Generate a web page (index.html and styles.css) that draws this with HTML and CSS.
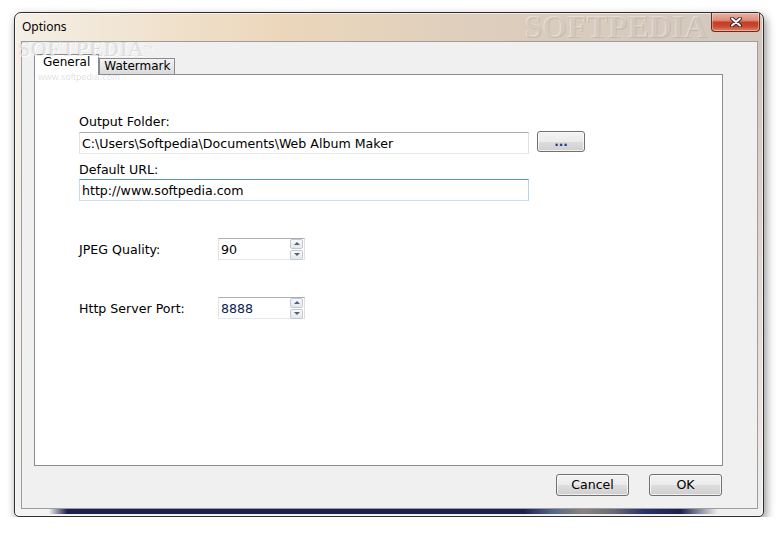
FILE: index.html
```html
<!DOCTYPE html>
<html>
<head>
    <meta charset="UTF-8">
    <title>Options</title>
    <link rel="stylesheet" href="styles.css">
</head>
<body>
    <div class="window">
        <div class="titlebar">
            <span class="title">Options</span>
            <button class="close-btn">
                <svg width="14" height="10" viewBox="0 0 14 10">
                    <path d="M3 1.5 L11 8.5 M11 1.5 L3 8.5" stroke="#3a2a2a" stroke-width="4" stroke-linecap="round"/>
                    <path d="M3 1.5 L11 8.5 M11 1.5 L3 8.5" stroke="#fff" stroke-width="2" stroke-linecap="round"/>
                </svg>
            </button>
        </div>

        <!-- softpedia watermarks -->
        <div class="mark mark-title">SOFTPEDIA</div>
        <div class="mark mark-client">SOFTPEDIA<span class="tm">™</span></div>
        <div class="mark mark-url">www.softpedia.com</div>

        <div class="frame-body">
            <div class="client">
                <div class="tabs">
                    <div class="tab active">General</div>
                    <div class="tab">Watermark</div>
                </div>

                <div class="tab-page">
                    <div class="field-label">Output Folder:</div>
                    <div class="folder-row">
                        <input class="text-box" type="text" value="C:\Users\Softpedia\Documents\Web Album Maker">
                        <button class="btn browse-btn">...</button>
                    </div>

                    <div class="field-label url-label">Default URL:</div>
                    <input class="text-box focused" type="text" value="http://www.softpedia.com">

                    <div class="spin-row">
                        <span class="spin-label">JPEG Quality:</span>
                        <div class="spin">
                            <input type="text" value="90">
                            <div class="spin-btns">
                                <span class="spin-up"></span>
                                <span class="spin-down"></span>
                            </div>
                        </div>
                    </div>

                    <div class="spin-row">
                        <span class="spin-label">Http Server Port:</span>
                        <div class="spin">
                            <input type="text" value="8888" class="port">
                            <div class="spin-btns">
                                <span class="spin-up"></span>
                                <span class="spin-down"></span>
                            </div>
                        </div>
                    </div>
                </div>

                <div class="dialog-buttons">
                    <button class="btn">Cancel</button>
                    <button class="btn">OK</button>
                </div>
            </div>
        </div>
    </div>
</body>
</html>
```

FILE: styles.css
```css
body {
    margin: 0;
    background: #fff;
    font-family: "DejaVu Sans", Verdana, sans-serif;
    font-size: 12.6px;
    color: #000;
}
.window {
    position: relative;
    margin: 12px 0 0 14px;
    width: 750px;
    height: 505px;
    box-sizing: border-box;
    border: 1px solid #2e2e2e;
    border-radius: 7px 7px 5px 5px;
    display: flex;
    flex-direction: column;
    box-shadow: inset 0 0 0 1px rgba(255,255,255,0.6), 2px 4px 10px rgba(0,0,0,0.45);
    background:
        linear-gradient(to right, #f4f4f4 0%, #f4f4f4 4.5%, #1c2150 7%, #1c2150 68%, #56688a 72%, #8b847e 76%, #6a6a78 80%, #2a3468 84%, #1c2150 89%, #9aa0b0 92%, #f0f0f0 94%, #f0f0f0 100%) left 0 bottom 2px / 100% 5px no-repeat,
        linear-gradient(to bottom, rgba(240,240,240,0) 0%, rgba(240,240,240,0) 12%, rgba(242,242,242,0.9) 100%),
        linear-gradient(to right, #f5efe5 0%, #ecd7bb 35%, #dccdbd 65%, #d3c7bc 100%);
}
.titlebar {
    height: 28px;
    display: flex;
    align-items: flex-start;
}
.title {
    flex: 1;
    padding-left: 7px;
    line-height: 28px;
    font-family: "Noto Sans", "Open Sans", sans-serif;
    font-size: 12px;
}
.close-btn {
    width: 49px;
    height: 19px;
    margin-right: 3px;
    padding: 0;
    border: 1px solid #6b2b20;
    border-top: none;
    border-radius: 0 0 4px 4px;
    background: linear-gradient(to bottom, #e8b2a4 0%, #dc8f7b 40%, #c63d22 52%, #c94a30 75%, #e0866c 100%);
    box-shadow: inset 0 0 0 1px rgba(255,255,255,0.35);
    display: flex;
    align-items: center;
    justify-content: center;
}
.mark {
    position: absolute;
    white-space: nowrap;
    pointer-events: none;
}
.mark-title {
    left: 510px;
    top: -4px;
    font-family: "Liberation Serif", serif;
    font-weight: bold;
    font-size: 32px;
    line-height: 36px;
    color: rgba(110,100,90,0.16);
    text-shadow: -1px -1px 0 rgba(255,255,255,0.35);
}
.mark-client {
    left: 3px;
    top: 30px;
    z-index: 2;
    font-family: "Liberation Serif", serif;
    font-weight: bold;
    font-size: 22px;
    line-height: 12px;
    color: rgba(0,0,0,0.09);
    text-shadow: 1px 1px 0 rgba(255,255,255,0.8);
}
.mark-client .tm {
    font-size: 9px;
    vertical-align: top;
}
.mark-url {
    left: 23px;
    top: 58px;
    z-index: 2;
    font-family: "Liberation Sans", Arial, sans-serif;
    font-size: 9.5px;
    line-height: 11px;
    color: rgba(0,0,0,0.15);
}
.frame-body {
    flex: 1;
    display: flex;
    padding: 0 5px 7px 6px;
}
.client {
    flex: 1;
    border: 1px solid #9d9d9d;
    background: #f0f0f0;
    padding: 12px 34px 0 12px;
}
.tabs {
    display: flex;
    align-items: flex-end;
    height: 20px;
    font-size: 12px;
}
.tab {
    border: 1px solid #898c95;
    border-bottom: none;
    background: linear-gradient(to bottom, #f3f3f3, #e6e6e6 50%, #dadada);
    padding: 0 4px;
    height: 15px;
    line-height: 15px;
}
.tab.active {
    position: relative;
    z-index: 1;
    background: #fff;
    padding: 0 8px;
    height: 20px;
    line-height: 15px;
    margin-bottom: -1px;
}
.tab-page {
    height: 392px;
    box-sizing: border-box;
    background: #fff;
    border: 1px solid #898c95;
    padding: 39px 0 0 44px;
}
.field-label {
    line-height: 16px;
    margin-bottom: 2px;
}
.url-label {
    margin-top: 8px;
    margin-bottom: 1px;
}
.folder-row {
    display: flex;
    align-items: flex-start;
    gap: 8px;
    margin-top: -1px;
}
.folder-row .text-box {
    margin-top: 1px;
}
.text-box {
    display: block;
    width: 450px;
    height: 22px;
    box-sizing: border-box;
    padding: 0 2px;
    border: 1px solid;
    border-color: #abadb3 #dbdfe6 #e3e9ef #e2e3ea;
    font-family: inherit;
    font-size: 12.6px;
    color: #000;
    background: #fff;
    outline: none;
}
.text-box.focused {
    border-color: #5794bf #b7d5ea #c7e2f1 #c5daed;
}
.btn {
    width: 73px;
    height: 22px;
    padding: 0;
    border: 1px solid #707070;
    border-radius: 3px;
    background: linear-gradient(to bottom, #f2f2f2 0%, #ebebeb 50%, #dddddd 51%, #cfcfcf 100%);
    box-shadow: inset 0 0 0 1px rgba(255,255,255,0.7);
    font-family: inherit;
    font-size: 12.6px;
    line-height: 18px;
    color: #000;
}
.browse-btn {
    width: 48px;
    height: 21px;
    color: #1c3a8a;
    font-weight: bold;
    font-size: 12px;
    line-height: 14px;
}
.spin-row {
    display: flex;
    align-items: center;
    margin-top: 37px;
}
.spin-label {
    width: 139px;
}
.spin {
    display: flex;
    align-items: center;
    width: 87px;
    height: 22px;
    box-sizing: border-box;
    border: 1px solid;
    border-color: #abadb3 #dbdfe6 #e3e9ef #e2e3ea;
    background: #fff;
}
.spin input {
    flex: 1;
    min-width: 0;
    border: none;
    padding: 0 2px;
    font-family: inherit;
    font-size: 12.6px;
    color: #000;
    outline: none;
}
.spin input.port {
    color: #0c1e52;
}
.spin-btns {
    display: flex;
    flex-direction: column;
    gap: 1px;
    margin-right: 1px;
}
.spin-up, .spin-down {
    position: relative;
    width: 11px;
    height: 8px;
    border: 1px solid #c4c8d0;
    border-radius: 2px;
    background: linear-gradient(to bottom, #f8f8f8, #e4e7ec);
}
.spin-up::after, .spin-down::after {
    content: "";
    position: absolute;
    left: 3px;
    top: 2px;
    border-left: 3px solid transparent;
    border-right: 3px solid transparent;
}
.spin-up::after {
    border-bottom: 3px solid #4c6282;
}
.spin-down::after {
    border-top: 3px solid #4c6282;
}
.dialog-buttons {
    display: flex;
    justify-content: flex-end;
    gap: 20px;
    margin-top: 8px;
    padding-right: 1px;
}
```
